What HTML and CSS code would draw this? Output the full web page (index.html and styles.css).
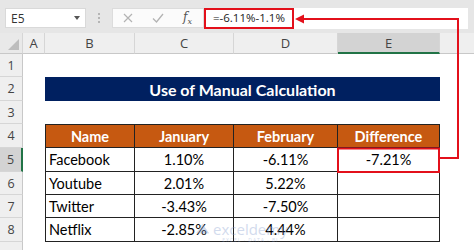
FILE: index.html
```html
<!DOCTYPE html>
<html>
<head>
<meta charset="utf-8">
<link rel="stylesheet" href="styles.css">
</head>
<body>
<div class="app">
  <div class="fbar">
    <div class="namebox"><span class="ref">E5</span><span class="caret"></span></div>
    <div class="grip"><i></i><i></i><i></i></div>
    <div class="fxbox">
      <svg class="ico" width="10" height="10" viewBox="0 0 10 10"><path d="M1 1L9 9M9 1L1 9" stroke="#b3b3b3" stroke-width="1.2" fill="none"/></svg>
      <svg class="ico" width="12" height="10" viewBox="0 0 12 10"><path d="M1 5.5L4.5 9L11 1" stroke="#b3b3b3" stroke-width="1.3" fill="none"/></svg>
      <span class="fx">f<sub>x</sub></span>
    </div>
    <div class="input"><div class="formula">=-6.11%-1.1%</div></div>
    <div class="tail"></div>
  </div>

  <div class="sheet">
    <div class="ch corner"><span class="tri"></span></div>
    <div class="ch">A</div><div class="ch">B</div><div class="ch">C</div><div class="ch">D</div><div class="ch sel">E</div><div class="ch last"></div>

    <div class="rh">1</div><div></div><div></div><div></div><div></div><div></div><div></div>

    <div class="rh">2</div><div></div><div class="title">Use of Manual Calculation</div><div></div>

    <div class="rh">3</div><div></div><div></div><div></div><div></div><div></div><div></div>

    <div class="rh">4</div><div></div>
    <div class="th first">Name</div><div class="th">January</div><div class="th">February</div><div class="th">Difference</div><div></div>

    <div class="rh rsel">5</div><div></div>
    <div class="td first">Facebook</div><div class="td num">1.10%</div><div class="td num">-6.11%</div><div class="td num">-7.21%</div><div></div>

    <div class="rh">6</div><div></div>
    <div class="td first">Youtube</div><div class="td num">2.01%</div><div class="td num">5.22%</div><div class="td num"></div><div></div>

    <div class="rh">7</div><div></div>
    <div class="td first">Twitter</div><div class="td num">-3.43%</div><div class="td num">-7.50%</div><div class="td num"></div><div></div>

    <div class="rh">8</div><div></div>
    <div class="td first">Netflix</div><div class="td num">-2.85%</div><div class="td num">4.44%</div><div class="td num"></div><div></div>

    <div class="rh"></div><div></div><div></div><div></div><div></div><div></div><div></div>
  </div>

  <div class="watermark">
    <svg class="wlogo" width="17" height="13" viewBox="0 0 18 14"><path d="M2 12L9 2L16 12Z" fill="#9fb3d9"/><path d="M6 12L11 5L16 12Z" fill="#7f99cc"/></svg>
    <div class="wtext">
      <span class="wname">exceldemy</span>
      <span class="wsub">EXCEL · DATA · BI</span>
    </div>
  </div>

  <svg class="annot" width="474" height="250" viewBox="0 0 474 250">
    <rect x="338" y="148.5" width="101" height="23.5" fill="none" stroke="#e3101b" stroke-width="2"/>
    <polyline points="439,158 458,158 458,19 301,19" fill="none" stroke="#e3101b" stroke-width="2"/>
    <polygon points="295,19 304,14.5 304,23.5" fill="#e3101b"/>
  </svg>
</div>
</body>
</html>
```

FILE: styles.css
```css
html, body {
  margin: 0;
  padding: 0;
  background: #ffffff;
}
.app {
  position: relative;
  width: 474px;
  height: 250px;
  overflow: hidden;
  font-family: Lato, "Open Sans", sans-serif;
  color: #000;
}

/* formula bar */
.fbar {
  display: flex;
  align-items: flex-start;
  height: 33px;
  box-sizing: border-box;
  padding-top: 8px;
  background: #e6e6e6;
}
.namebox {
  margin-left: 5px;
  width: 81px;
  height: 20px;
  box-sizing: border-box;
  background: #fff;
  border: 1px solid #d9d9d9;
  display: flex;
  align-items: center;
  justify-content: space-between;
  padding: 0 5px 0 5px;
  font-family: "Open Sans", sans-serif;
  font-size: 12px;
  color: #333;
}
.caret {
  width: 0;
  height: 0;
  border-left: 3.5px solid transparent;
  border-right: 3.5px solid transparent;
  border-top: 4px solid #555;
}
.grip {
  width: 26px;
  height: 20px;
  display: flex;
  flex-direction: column;
  align-items: center;
  justify-content: center;
  gap: 2px;
}
.grip i {
  display: block;
  width: 2px;
  height: 2px;
  background: #b5b5b5;
}
.fxbox {
  width: 92px;
  height: 20px;
  box-sizing: border-box;
  background: #fbfbfb;
  border: 1px solid #dcdcdc;
  display: flex;
  align-items: center;
  padding-left: 10px;
  gap: 19px;
}
.fx {
  font-family: "DejaVu Serif", "Liberation Serif", serif;
  font-style: italic;
  font-size: 12px;
  color: #555;
}
.fx sub {
  font-size: 8px;
}
.input {
  width: 264px;
  height: 21px;
  background: #fff;
  display: flex;
}
.formula {
  width: 90px;
  height: 21px;
  box-sizing: border-box;
  border: 2px solid #e3101b;
  padding-left: 7px;
  font-family: "Open Sans", sans-serif;
  font-size: 11.5px;
  line-height: 16px;
  color: #222;
}
.tail {
  flex: 1;
}

/* sheet grid */
.sheet {
  display: grid;
  grid-template-columns: 23px 22px 90px 99px 104px 102px 34px;
  grid-template-rows: 21px 23px 24px 23px 24px 24px 23px 23px 24px 20px;
}
.ch {
  background: #efefef;
  border-right: 1px solid #d6d6d6;
  border-bottom: 1px solid #c8c8c8;
  display: flex;
  align-items: center;
  justify-content: center;
  font-family: "Open Sans", sans-serif;
  font-size: 13px;
  color: #444;
}
.ch.corner {
  background: #e9e9e9;
  position: relative;
  justify-content: flex-end;
  align-items: flex-end;
  padding: 0 3px 3px 0;
}
.tri {
  width: 0;
  height: 0;
  border-left: 11px solid transparent;
  border-bottom: 11px solid #bdbdbd;
}
.ch.sel {
  background: #d3d3d3;
  border-bottom: 2px solid #217346;
}
.ch.last {
  border-right: none;
}
.rh {
  background: #efefef;
  border-right: 1px solid #c8c8c8;
  border-bottom: 1px solid #d6d6d6;
  display: flex;
  align-items: center;
  justify-content: center;
  font-family: "Open Sans", sans-serif;
  font-size: 12.5px;
  color: #444;
}
.rh.rsel {
  background: #d3d3d3;
  border-right: 2px solid #217346;
}

.title {
  grid-column: span 4;
  background: #002060;
  color: #fff;
  font-weight: 700;
  font-size: 16px;
  display: flex;
  align-items: center;
  justify-content: center;
}
.th {
  background: #c65911;
  color: #fff;
  font-weight: 700;
  font-size: 14.5px;
  display: flex;
  align-items: center;
  justify-content: center;
  border-top: 1px solid #222;
  border-right: 1px solid #222;
  border-bottom: 1px solid #222;
}
.td {
  font-size: 14.5px;
  display: flex;
  align-items: center;
  padding-left: 3px;
  border-right: 1px solid #222;
  border-bottom: 1px solid #222;
}
.td.num {
  justify-content: center;
  padding-left: 0;
}
.first {
  border-left: 1px solid #222;
}

/* watermark */
.watermark {
  position: absolute;
  left: 194px;
  top: 222px;
  display: flex;
  align-items: flex-start;
  gap: 2px;
  opacity: 0.35;
}
.wtext {
  display: flex;
  flex-direction: column;
  align-items: center;
}
.wname {
  font-family: "Open Sans", sans-serif;
  font-size: 15px;
  line-height: 15px;
  color: #7f99cc;
}
.wsub {
  font-family: "Open Sans", sans-serif;
  font-size: 5px;
  line-height: 6px;
  color: #7f99cc;
  letter-spacing: 1px;
}

.annot {
  position: absolute;
  left: 0;
  top: 0;
  pointer-events: none;
}
```
